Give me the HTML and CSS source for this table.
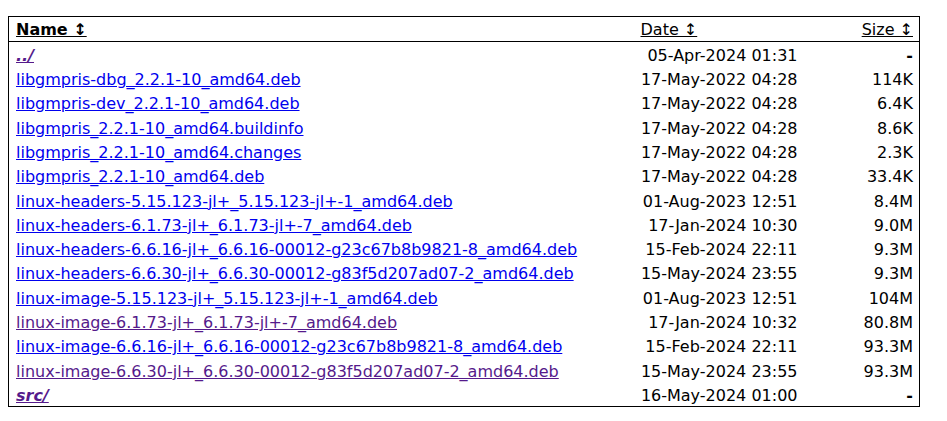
FILE: index.html
```html
<!DOCTYPE html>
<html>
<head>
<meta charset="utf-8">
<title>Index of /</title>
<link rel="stylesheet" href="styles.css">
</head>
<body>
<table class="listing">
<colgroup><col class="c-name"><col class="c-date"><col class="c-size"></colgroup>
<thead>
<tr><th class="name"><a class="sort active" href="#">Name&nbsp;↕</a></th><th class="date"><a class="sort" href="#">Date&nbsp;↕</a></th><th class="size"><a class="sort" href="#">Size&nbsp;↕</a></th></tr>
</thead>
<tbody>
<tr><td class="name"><a class="dir visited" href="#">../</a></td><td class="date">05-Apr-2024 01:31</td><td class="size dash">-</td></tr>
<tr><td class="name"><a href="#">libgmpris-dbg_2.2.1-10_amd64.deb</a></td><td class="date">17-May-2022 04:28</td><td class="size">114K</td></tr>
<tr><td class="name"><a href="#">libgmpris-dev_2.2.1-10_amd64.deb</a></td><td class="date">17-May-2022 04:28</td><td class="size">6.4K</td></tr>
<tr><td class="name"><a href="#">libgmpris_2.2.1-10_amd64.buildinfo</a></td><td class="date">17-May-2022 04:28</td><td class="size">8.6K</td></tr>
<tr><td class="name"><a href="#">libgmpris_2.2.1-10_amd64.changes</a></td><td class="date">17-May-2022 04:28</td><td class="size">2.3K</td></tr>
<tr><td class="name"><a href="#">libgmpris_2.2.1-10_amd64.deb</a></td><td class="date">17-May-2022 04:28</td><td class="size">33.4K</td></tr>
<tr><td class="name"><a href="#">linux-headers-5.15.123-jl+_5.15.123-jl+-1_amd64.deb</a></td><td class="date">01-Aug-2023 12:51</td><td class="size">8.4M</td></tr>
<tr><td class="name"><a href="#">linux-headers-6.1.73-jl+_6.1.73-jl+-7_amd64.deb</a></td><td class="date">17-Jan-2024 10:30</td><td class="size">9.0M</td></tr>
<tr><td class="name"><a href="#">linux-headers-6.6.16-jl+_6.6.16-00012-g23c67b8b9821-8_amd64.deb</a></td><td class="date">15-Feb-2024 22:11</td><td class="size">9.3M</td></tr>
<tr><td class="name"><a href="#">linux-headers-6.6.30-jl+_6.6.30-00012-g83f5d207ad07-2_amd64.deb</a></td><td class="date">15-May-2024 23:55</td><td class="size">9.3M</td></tr>
<tr><td class="name"><a href="#">linux-image-5.15.123-jl+_5.15.123-jl+-1_amd64.deb</a></td><td class="date">01-Aug-2023 12:51</td><td class="size">104M</td></tr>
<tr><td class="name"><a class="visited" href="#">linux-image-6.1.73-jl+_6.1.73-jl+-7_amd64.deb</a></td><td class="date">17-Jan-2024 10:32</td><td class="size">80.8M</td></tr>
<tr><td class="name"><a href="#">linux-image-6.6.16-jl+_6.6.16-00012-g23c67b8b9821-8_amd64.deb</a></td><td class="date">15-Feb-2024 22:11</td><td class="size">93.3M</td></tr>
<tr><td class="name"><a class="visited" href="#">linux-image-6.6.30-jl+_6.6.30-00012-g83f5d207ad07-2_amd64.deb</a></td><td class="date">15-May-2024 23:55</td><td class="size">93.3M</td></tr>
<tr><td class="name"><a class="dir visited" href="#">src/</a></td><td class="date">16-May-2024 01:00</td><td class="size dash">-</td></tr>
</tbody>
</table>
</body>
</html>
```
FILE: styles.css
```css
html, body {
  background: #fff;
}
body {
  margin: 8px;
  font-family: "DejaVu Sans", Verdana, sans-serif;
  font-size: 16px;
  color: #000;
}
.listing {
  margin-top: 8px;
  width: 912px;
  border: 1px solid #000;
  border-collapse: collapse;
  table-layout: fixed;
}
.c-name { width: 625px; }
.c-date { width: 170px; }
.c-size { width: 116px; }
.listing th {
  font-weight: normal;
  box-sizing: border-box;
  padding: 3px 7px 2px;
  line-height: 19px;
  border-bottom: 1px solid #000;
  text-align: left;
  white-space: nowrap;
}
.listing th.size { text-align: right; padding-right: 6px; }
.listing td {
  padding: 3.8px 7px 1.5px;
  line-height: 19px;
  white-space: nowrap;
}
.listing td.date { text-align: right; padding-right: 6px; }
.listing td.size { text-align: right; padding-right: 6px; }
.listing td.dash { font-weight: bold; }
a { color: #0000ee; text-decoration: underline; }
a.visited { color: #551a8b; }
a.dir { font-weight: bold; font-style: italic; }
a.sort { color: #000; }
a.sort.active { font-weight: bold; }
```
